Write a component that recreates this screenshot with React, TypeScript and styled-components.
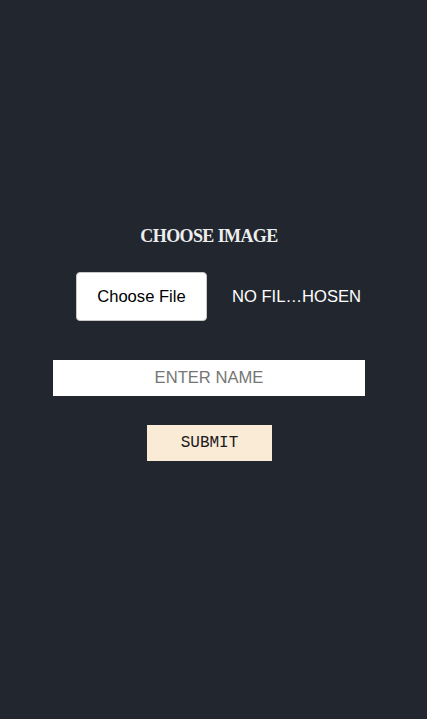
import styled, { createGlobalStyle } from 'styled-components'

const GlobalStyle = createGlobalStyle`
  html, body {
    margin: 0;
    padding: 0;
    background-color: #22272f;
    min-height: 100%;
  }
  body {
    font-family: "Liberation Sans", Arial, sans-serif;
  }
`

const Page = styled.main`
  min-height: 719px;
  box-sizing: border-box;
  padding: 228px 9px 0 0;
  display: flex;
  flex-direction: column;
  align-items: center;
`

const Title = styled.h2`
  margin: 0;
  font-family: "Liberation Serif", "Times New Roman", serif;
  font-size: 18px;
  line-height: 17px;
  letter-spacing: -0.6px;
  font-weight: 700;
  color: #eeeeee;
  text-transform: uppercase;
`

const FileRow = styled.div`
  margin: 27px 0 0 19px;
  display: flex;
  align-items: center;
  gap: 25px;
`

const FileButton = styled.label`
  box-sizing: border-box;
  width: 131px;
  height: 49px;
  display: flex;
  align-items: center;
  justify-content: center;
  background: #ffffff;
  border: 1px solid #c8c8c8;
  border-radius: 4px;
  color: #000;
  font-size: 16.6px;
  cursor: pointer;
`

const FileName = styled.span`
  color: #ffffff;
  font-size: 16.6px;
  white-space: nowrap;
  text-transform: uppercase;
`

const NameInput = styled.input`
  margin-top: 39px;
  box-sizing: border-box;
  width: 312px;
  height: 36px;
  border: none;
  outline: none;
  background: #ffffff;
  text-align: center;
  font-family: "Liberation Sans", Arial, sans-serif;
  font-size: 16.6px;
  color: #222;

  &::placeholder {
    color: #757575;
  }
`

const SubmitButton = styled.button`
  margin: 29px 0 0 1px;
  width: 125px;
  height: 36px;
  border: none;
  background: #faebd7;
  color: #1a1a1a;
  font-family: "Liberation Mono", "Courier New", monospace;
  font-size: 16px;
  cursor: pointer;
`

export default function App() {
  return (
    <>
      <GlobalStyle />
      <Page>
        <Title>Choose Image</Title>
        <FileRow>
          <FileButton htmlFor="file">Choose File</FileButton>
          <input id="file" type="file" hidden />
          <FileName>No fil…hosen</FileName>
        </FileRow>
        <NameInput type="text" placeholder="ENTER NAME" />
        <SubmitButton type="submit">SUBMIT</SubmitButton>
      </Page>
    </>
  )
}
